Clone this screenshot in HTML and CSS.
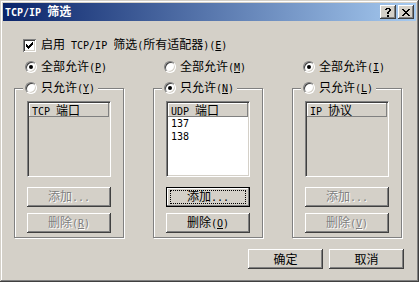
FILE: index.html
```html
<!DOCTYPE html>
<html lang="zh-CN">
<head>
    <meta charset="UTF-8">
    <title>TCP/IP 筛选</title>
    <link rel="stylesheet" href="styles.css">
</head>
<body>

<div class="window">
    <!-- Title bar -->
    <div class="titlebar">
        <span class="title"><span class="en">TCP/IP </span>筛选</span>
        <div class="cap-buttons">
            <span class="cap-btn">
                <svg width="6" height="9" viewBox="0 0 6 9" shape-rendering="crispEdges"><path d="M1 0h4v1H1z M0 1h2v1H0z M4 1h2v1H4z M4 2h2v1H4z M3 3h2v1H3z M2 4h2v2H2z M2 7h2v2H2z" fill="#000"/></svg>
            </span>
            <span class="cap-btn">
                <svg width="8" height="7" viewBox="0 0 8 7" shape-rendering="crispEdges"><path d="M0 0h2v1H0z M6 0h2v1H6z M1 1h2v1H1z M5 1h2v1H5z M2 2h4v1H2z M3 3h2v1H3z M2 4h4v1H2z M1 5h2v1H1z M5 5h2v1H5z M0 6h2v1H0z M6 6h2v1H6z" fill="#000"/></svg>
            </span>
        </div>
    </div>

    <div class="content">
        <div class="check-row">
            <span class="checkbox">
                <svg width="13" height="13" viewBox="0 0 13 13" shape-rendering="crispEdges"><path d="M3 5h1v3H3z M4 6h1v3H4z M5 7h1v3H5z M6 6h1v3H6z M7 5h1v3H7z M8 4h1v3H8z M9 3h1v3H9z" fill="#000"/></svg>
            </span>
            <span>启用<span class="en"> TCP/IP </span>筛选<span class="en">(</span>所有适配器<span class="en">)(<u>E</u>)</span></span>
        </div>

        <div class="columns">
            <!-- TCP -->
            <div class="column">
                <div class="radio-row"><span class="radio on"></span><span>全部允许<span class="en">(<u>P</u>)</span></span></div>
                <div class="group">
                    <div class="group-caption"><span class="radio"></span><span>只允许<span class="en">(<u>Y</u>)</span></span></div>
                    <div class="listbox disabled">
                        <div class="list-header"><span class="en">TCP </span>端口</div>
                    </div>
                    <button class="btn add" disabled>添加<span class="en">...</span></button>
                    <button class="btn" disabled>删除<span class="en">(<u>R</u>)</span></button>
                </div>
            </div>

            <!-- UDP -->
            <div class="column">
                <div class="radio-row"><span class="radio"></span><span>全部允许<span class="en">(<u>M</u>)</span></span></div>
                <div class="group">
                    <div class="group-caption"><span class="radio on"></span><span>只允许<span class="en">(<u>N</u>)</span></span></div>
                    <div class="listbox">
                        <div class="list-header"><span class="en">UDP </span>端口</div>
                        <div class="list-item en">137</div>
                        <div class="list-item en">138</div>
                    </div>
                    <button class="btn add default">添加<span class="en">...</span></button>
                    <button class="btn">删除<span class="en">(<u>O</u>)</span></button>
                </div>
            </div>

            <!-- IP -->
            <div class="column">
                <div class="radio-row"><span class="radio on"></span><span>全部允许<span class="en">(<u>I</u>)</span></span></div>
                <div class="group">
                    <div class="group-caption"><span class="radio"></span><span>只允许<span class="en">(<u>L</u>)</span></span></div>
                    <div class="listbox disabled">
                        <div class="list-header"><span class="en">IP </span>协议</div>
                    </div>
                    <button class="btn add" disabled>添加<span class="en">...</span></button>
                    <button class="btn" disabled>删除<span class="en">(<u>V</u>)</span></button>
                </div>
            </div>
        </div>

        <div class="footer">
            <button class="btn">确定</button>
            <button class="btn">取消</button>
        </div>
    </div>
</div>

</body>
</html>
```

FILE: styles.css
```css
body {
    margin: 0;
    padding: 0;
    font-family: "Noto Sans CJK SC", "Liberation Sans", sans-serif;
    font-size: 12px;
    line-height: 14px;
    color: #000;
    background-color: #d4d0c8;
}

/* half-width latin runs, like the dialog font */
.en {
    font-family: "DejaVu Sans Mono", monospace;
    font-size: 10px;
    white-space: pre;
}

/* Window frame */
.window {
    width: 419px;
    height: 282px;
    box-sizing: border-box;
    padding: 3px;
    background-color: #d4d0c8;
    box-shadow: inset -1px -1px #404040, inset 1px 1px #d4d0c8, inset -2px -2px #808080, inset 2px 2px #fff;
}

.titlebar {
    height: 18px;
    display: flex;
    align-items: center;
    justify-content: space-between;
    padding: 0 2px;
    background: linear-gradient(to right, #0a246a, #a6caf0);
}

.title {
    color: #fff;
    font-weight: bold;
}

.cap-buttons {
    display: flex;
    gap: 2px;
}

.cap-btn {
    width: 16px;
    height: 14px;
    display: flex;
    align-items: center;
    justify-content: center;
    background-color: #d4d0c8;
    box-shadow: inset -1px -1px #404040, inset 1px 1px #fff, inset -2px -2px #808080, inset 2px 2px #d4d0c8;
}

/* Body */
.content {
    padding: 17px 12px 0 11px;
}

.check-row {
    display: flex;
    align-items: center;
    gap: 5px;
    height: 14px;
    padding-left: 9px;
}

.checkbox {
    width: 13px;
    height: 13px;
    background-color: #fff;
    box-shadow: inset 1px 1px #808080, inset -1px -1px #fff, inset 2px 2px #404040, inset -2px -2px #d4d0c8;
}

.checkbox svg {
    display: block;
}

.columns {
    display: flex;
    gap: 29px;
    margin-top: 7px;
}

.column {
    width: 110px;
}

.radio-row {
    display: flex;
    align-items: center;
    gap: 4px;
    height: 16px;
    padding-left: 11px;
}

.radio {
    width: 12px;
    height: 12px;
    box-sizing: border-box;
    flex: none;
    border-radius: 50%;
    border: 1px solid;
    border-color: #808080 #fff #fff #808080;
    background-color: #fff;
    box-shadow: inset 1px 1px #404040, inset -1px -1px #d4d0c8;
    display: flex;
    align-items: center;
    justify-content: center;
}

.radio.on::after {
    content: "";
    width: 4px;
    height: 4px;
    border-radius: 50%;
    background-color: #000;
}

/* Group box */
.group {
    margin-top: 13px;
    border: 1px solid #808080;
    box-shadow: 1px 1px #fff, inset 1px 1px #fff;
    padding: 0 12px 4px;
}

.group-caption {
    display: flex;
    align-items: center;
    gap: 4px;
    width: fit-content;
    height: 14px;
    margin: -8px 0 0 -4px;
    padding: 0 3px 0 2px;
    background-color: #d4d0c8;
}

.listbox {
    margin-top: 6px;
    height: 76px;
    box-sizing: border-box;
    border: 1px solid;
    border-color: #808080 #fff #fff #808080;
    box-shadow: inset 1px 1px #404040, inset -1px -1px #d4d0c8;
    padding: 1px;
    background-color: #fff;
}

.listbox.disabled {
    background-color: #d4d0c8;
}

.list-header {
    height: 14px;
    padding-left: 3px;
    background-color: #d4d0c8;
    box-shadow: inset -1px -1px #808080, inset 1px 1px #fff;
}

.list-item {
    height: 13px;
    line-height: 13px;
    padding-left: 3px;
}

/* Buttons */
.btn {
    display: block;
    width: 100%;
    height: 20px;
    margin-top: 6px;
    padding: 0;
    border: none;
    font: inherit;
    color: #000;
    background-color: #d4d0c8;
    box-shadow: inset -1px -1px #404040, inset 1px 1px #fff, inset -2px -2px #808080, inset 2px 2px #d4d0c8;
}

.btn.add {
    margin-top: 10px;
}

.btn:disabled {
    color: #808080;
    text-shadow: 1px 1px #fff;
}

.btn.default {
    position: relative;
    box-shadow: inset 0 0 0 1px #000, inset -2px -2px #808080, inset 2px 2px #fff;
}

.btn.default::after {
    content: "";
    position: absolute;
    inset: 3px 4px;
    border: 1px dotted #000;
}

.footer {
    display: flex;
    justify-content: flex-end;
    gap: 6px;
    margin-top: 11px;
}

.footer .btn {
    width: 75px;
    margin-top: 0;
}
```
